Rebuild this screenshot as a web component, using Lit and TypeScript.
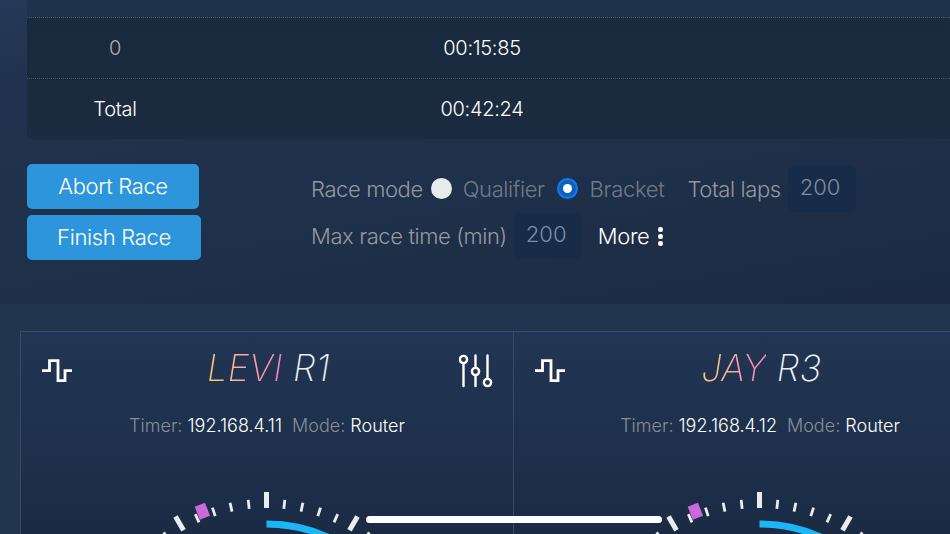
import { LitElement, html, css, svg } from "lit";
import { customElement } from "lit/decorators.js";

const polar = (cx: number, cy: number, r: number, deg: number) => {
  const a = (deg * Math.PI) / 180;
  return [cx + r * Math.sin(a), cy - r * Math.cos(a)];
};

function gauge() {
  const W = 493, H = 95, cx = 246.5, cy = 234;
  const ticks = [];
  for (let d = -60; d <= 60; d += 6) {
    const long = d % 30 === 0;
    const [x1, y1] = polar(cx, cy, 166, d);
    const [x2, y2] = polar(cx, cy, long ? 182 : 175, d);
    ticks.push(svg`<line x1=${x1} y1=${y1} x2=${x2} y2=${y2} stroke="#e9edf0" stroke-width=${long ? 5 : 2.8}></line>`);
  }
  const [ax, ay] = polar(cx, cy, 150, 0);
  const [bx, by] = polar(cx, cy, 150, 60);
  const [mx, my] = polar(cx, cy, 175, -21.5);
  return html`<svg class="gauge" width=${W} height=${H} viewBox="0 0 ${W} ${H}">
    ${ticks}
    <path d="M${ax} ${ay} A150 150 0 0 1 ${bx} ${by}" fill="none" stroke="#1cb5f6" stroke-width="7"></path>
    <rect x=${mx - 5.5} y=${my - 7} width="11" height="14" fill="#c96ad8" transform="rotate(-21.5 ${mx} ${my})"></rect>
  </svg>`;
}

const wave = html`<svg class="wave" width="32" height="24" viewBox="0 0 32 24" fill="none" stroke="#fff" stroke-width="2.8">
  <path d="M1 11.7H8.5V1.7H17V21.7H24V11.7H31"></path></svg>`;

const sliders = html`<svg class="sliders" width="34" height="34" viewBox="0 0 34 34" fill="none" stroke="#fff" stroke-width="2.4" stroke-linecap="round">
  <path d="M4.5 9.5V32M16.5 1.5V13.5M16.5 21V32M28.5 1.5V24"></path>
  <circle cx="4.5" cy="5.5" r="3.6"></circle><circle cx="16.5" cy="17.5" r="3.6"></circle><circle cx="28.5" cy="28.5" r="3.6"></circle></svg>`;

@customElement("app-root")
export class AppRoot extends LitElement {
  static styles = css`
    :host { display: block; width: 950px; height: 534px; overflow: hidden; position: relative;
      font-family: Inter, "Liberation Sans", sans-serif; font-weight: 350; color: #fff; background: #22344f; }
    .top { height: 304px; box-sizing: border-box; padding-left: 27px;
      background: linear-gradient(170deg, #243a58 0, #20324d 20%, #1f304a 55%, #1c2b43 100%); }
    .table { height: 139px; background: linear-gradient(#1f324b 0, #1f324b 17px, #1a2a3e 18px, #1b2b40 100%);
      border-bottom-left-radius: 6px; display: flex; flex-direction: column; font-size: 20px; letter-spacing: -0.3px; }
    .row { display: grid; grid-template-columns: 176px 558px 1fr; align-items: center; text-align: center;
      height: 61px; flex: none; border-top: 1px dotted #46556a; box-sizing: border-box; }
    .stub { height: 17px; flex: none; }
    .muted { color: #b0b0b0; }
    .actions { display: flex; margin-top: 25px; }
    .buttons { display: flex; flex-direction: column; align-items: flex-start; gap: 6px; width: 284px; flex: none; }
    .btn { height: 45px; border-radius: 5px; background: #2c95dc; display: flex; align-items: center; justify-content: center;
      font-size: 22px; letter-spacing: -0.35px; box-sizing: border-box; padding-bottom: 2px; }
    .abort { width: 172px; }
    .finish { width: 174px; }
    .form { display: flex; flex-direction: column; font-size: 22px; letter-spacing: -0.4px; color: #95989e; margin-top: 1px; }
    .line { display: flex; align-items: center; height: 47px; }
    .radio { width: 21px; height: 21px; border-radius: 50%; box-sizing: border-box; flex: none; }
    .off { background: #e9ecef; margin-left: 8px; }
    .on { background: #0f5fb8; border: 2px solid #0d7bf2; margin-left: 12px; display: flex; align-items: center; justify-content: center; }
    .on i { width: 9px; height: 9px; border-radius: 50%; background: #fff; display: block; }
    .opt { color: #737a84; margin-left: 11px; }
    .on + .opt { margin-left: 12px; letter-spacing: -0.3px; }
    .laps { margin-left: 23px; }
    .input { width: 68px; height: 46px; border-radius: 7px; background: #172c48; color: #7f8da0; font-size: 22px; letter-spacing: 0;
      box-sizing: border-box; padding: 0 12px 3px; display: flex; align-items: center; margin-left: 7px; }
    .more { color: #fff; margin-left: 16px; display: flex; align-items: center; gap: 9px; }
    .dots { display: flex; flex-direction: column; gap: 2.5px; margin-top: 2px; }
    .dots i { width: 4.5px; height: 4.5px; border-radius: 50%; background: #fff; display: block; }
    .bottom { padding: 27px 0 0 20px; display: flex; height: 230px; box-sizing: border-box; background: #22354f; }
    .panel { width: 493px; flex: none; box-sizing: border-box; border-top: 1px solid #3a4a60; border-left: 1px solid #3a4a60;
      height: 203px; overflow: hidden; background: linear-gradient(#213654 0, #1b2b44 100%); }
    .head { display: grid; grid-template-columns: 32px 1fr 34px; align-items: center; padding: 22px 20px 0 20px; height: 34px; }
    .wave, .sliders { display: block; }
    .name { text-align: center; font-size: 36px; font-weight: 250; font-style: italic; line-height: 34px; color: #eef0f3;
      margin-top: -6px; padding-left: 5px; letter-spacing: 0.3px; }
    .grad { background: linear-gradient(90deg, #f8cf6f 0, #ffa9a0 50%, #ff80bf 100%); -webkit-background-clip: text; background-clip: text; color: transparent; }
    .info { text-align: center; font-size: 18px; margin-top: 26px; height: 26px; line-height: 24px; color: #8a8e94; }
    .info b { font-weight: 350; color: #fff; }
    .info span { margin-left: 10px; }
    .gauge { display: block; margin-left: -1px; }
    .home { position: absolute; left: 366px; top: 516px; width: 296px; height: 7px; border-radius: 4px; background: #fff; }
  `;

  panel(name: string, rot: string, ip: string, icon: unknown) {
    return html`<div class="panel">
      <div class="head">${wave}<div class="name"><span class="grad">${name}</span> ${rot}</div>${icon}</div>
      <div class="info">Timer: <b>${ip}</b><span>Mode:</span> <b>Router</b></div>
      ${gauge()}
    </div>`;
  }

  render() {
    return html`
      <div class="top">
        <div class="table">
          <div class="stub"></div>
          <div class="row"><span class="muted">0</span><span>00:15:85</span></div>
          <div class="row"><span>Total</span><span>00:42:24</span></div>
        </div>
        <div class="actions">
          <div class="buttons">
            <div class="btn abort">Abort Race</div>
            <div class="btn finish">Finish Race</div>
          </div>
          <div class="form">
            <div class="line">Race mode<span class="radio off"></span><span class="opt">Qualifier</span>
              <span class="radio on"><i></i></span><span class="opt">Bracket</span>
              <span class="laps">Total laps</span><span class="input">200</span></div>
            <div class="line">Max race time (min)<span class="input">200</span>
              <span class="more">More<span class="dots"><i></i><i></i><i></i></span></span></div>
          </div>
        </div>
      </div>
      <div class="bottom">
        ${this.panel("LEVI", "R1", "192.168.4.11", sliders)}
        ${this.panel("JAY", "R3", "192.168.4.12", sliders)}
      </div>
      <div class="home"></div>
    `;
  }
}
